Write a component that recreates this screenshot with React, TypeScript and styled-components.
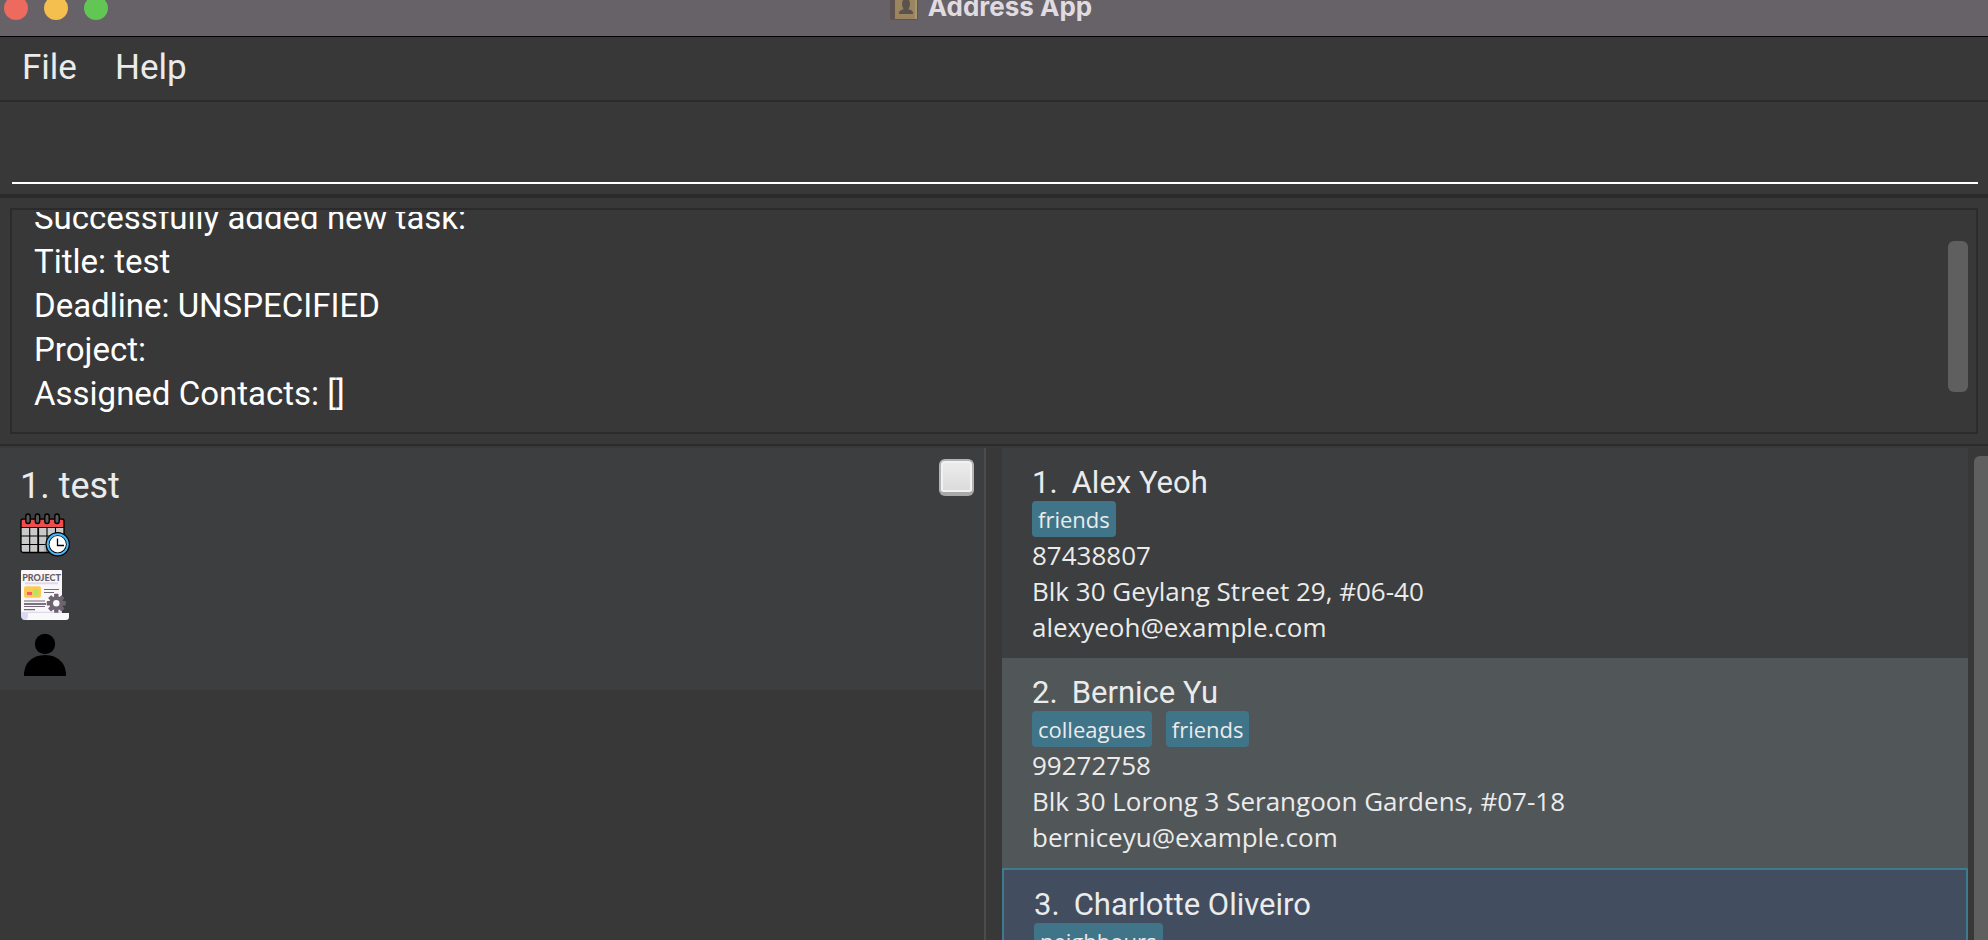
import React, { useEffect, useRef } from "react";
import styled, { createGlobalStyle } from "styled-components";

const color = {
  base: "#383838",
  line: "#2b2b2b",
  card: "#3c3e3f",
  cardAlt: "#515658",
  selected: "#424d5f",
  accent: "#3e7b91",
  tag: "#407489",
  thumb: "#5f5f5f",
  text: "#ebebeb",
};

const uiFont = `Roboto, "Liberation Sans", sans-serif`;
const bodyFont = `"Open Sans", "Noto Sans", sans-serif`;

const GlobalStyle = createGlobalStyle`
  * { box-sizing: border-box; }
  body { margin: 0; background: ${color.base}; overflow: hidden; }
`;

const Window = styled.div`
  display: flex;
  flex-direction: column;
  height: 100vh;
  background: ${color.base};
  color: ${color.text};
  font-family: ${uiFont};
`;

const TitleBar = styled.header`
  flex: none;
  display: grid;
  grid-template-columns: 1fr auto 1fr;
  align-items: center;
  height: 57px;
  margin-top: -20px;
  padding-right: 6px;
  background: #676268;
  border-bottom: 1px solid #000;
`;

const WindowButtons = styled.div`
  display: flex;
  gap: 16px;
  padding-left: 4px;
`;

const WindowButton = styled.button<{ $color: string }>`
  width: 24px;
  height: 24px;
  padding: 0;
  border: 0;
  border-radius: 50%;
  background: ${(p) => p.$color};
`;

const WindowTitle = styled.h1`
  display: flex;
  align-items: center;
  gap: 10px;
  margin: 0;
  padding-bottom: 2px;
  font: 700 26px/32px Inter, sans-serif;
  color: #e0dbe0;
`;

const MenuBar = styled.nav`
  flex: none;
  display: flex;
  height: 65px;
  padding: 0 3px 2px;
  border-bottom: 2px solid ${color.line};
`;

const MenuButton = styled.button`
  padding: 0 19px;
  border: 0;
  background: none;
  color: ${color.text};
  font: 400 35px/40px ${uiFont};
`;

const CommandArea = styled.form`
  flex: none;
  padding: 0 10px 10px 12px;
  border-bottom: 4px solid ${color.line};
`;

const CommandInput = styled.input`
  display: block;
  width: 100%;
  height: 82px;
  padding: 0;
  border: 0;
  border-bottom: 2px solid #fff;
  outline: 0;
  background: none;
  color: #fff;
  font: 400 33px/44px ${uiFont};
`;

const ResultArea = styled.section`
  flex: none;
  padding: 10px;
  border-bottom: 2px solid ${color.line};
`;

const ResultBox = styled.div`
  display: flex;
  height: 226px;
  padding: 2px 8px 0 0;
  border: 2px solid ${color.line};
`;

const ResultText = styled.textarea`
  flex: 1;
  padding: 0 22px;
  border: 0;
  outline: 0;
  resize: none;
  overflow: hidden;
  background: none;
  color: #fff;
  font: 400 33px/44px ${uiFont};
`;

const ResultThumb = styled.div`
  width: 20px;
  height: 151px;
  margin-top: 29px;
  border-radius: 6px;
  background: ${color.thumb};
`;

const Panels = styled.main`
  flex: 1;
  min-height: 0;
  display: grid;
  grid-template-columns: 986fr 1002fr;
  padding-top: 2px;
`;

const TaskPanel = styled.section`
  border-right: 2px solid #4b4c4d;
`;

const TaskCard = styled.article`
  display: flex;
  justify-content: space-between;
  padding: 11px 10px 10px 20px;
  background: ${color.card};
`;

const TaskDetails = styled.div`
  display: flex;
  flex-direction: column;
  gap: 10px;
  padding-top: 3px;
`;

const TaskTitle = styled.h2`
  margin: 0 0 -10px;
  font: 400 36px/48px ${uiFont};
`;

const TaskCheckbox = styled.input`
  appearance: none;
  width: 35px;
  height: 37px;
  margin: 0;
  border: 2px solid #b4b4b4;
  border-bottom: 4px solid #a9a9a9;
  border-radius: 6px;
  background: linear-gradient(#ededed, #dadada);
  box-shadow: inset 0 0 0 2px #f2f2f2;
`;

const ContactPanel = styled.section`
  display: flex;
  gap: 6px;
  min-height: 0;
  padding-left: 16px;
  overflow: hidden;
`;

const ContactList = styled.ol`
  flex: 1;
  margin: 0;
  padding: 0;
  list-style: none;
`;

const ListThumb = styled.div`
  width: 14px;
  margin-top: 8px;
  border-radius: 6px 0 0 0;
  background: ${color.thumb};
`;

type Tone = "card" | "cardAlt" | "selected";

const ContactCard = styled.li<{ $tone: Tone }>`
  padding: 16px 30px 13px;
  background: ${(p) => color[p.$tone]};
  border: ${(p) => (p.$tone === "selected" ? `2px solid ${color.accent}` : "0")};
`;

const ContactName = styled.h2`
  display: flex;
  gap: 14px;
  margin: 0;
  font: 400 31px/37px ${uiFont};
`;

const Tags = styled.div`
  display: flex;
  gap: 14px;
`;

const Tag = styled.span`
  padding: 3px 6px;
  border-radius: 4px;
  background: ${color.tag};
  font: 400 22px/30px ${bodyFont};
`;

const ContactLine = styled.p`
  margin: 0;
  font: 400 26px/36px ${bodyFont};
`;

const Icon = styled.svg`
  display: block;
`;

const BookIcon = () => (
  <Icon width="28" height="28" viewBox="0 0 28 28" aria-hidden="true">
    <rect x="0" y="0" width="28" height="27" rx="2" fill="#5e5350" />
    <rect x="5" y="0" width="22" height="26" fill="#9a8560" />
    <rect x="25" y="0" width="2" height="26" fill="#ab956d" />
    <ellipse cx="16" cy="11" rx="4" ry="6" fill="#5c524c" />
    <path d="M9 21v-2q1-2 5-3v-2h4v2q4 1 5 3v2z" fill="#5c524c" />
  </Icon>
);

const DeadlineIcon = () => (
  <Icon width="50" height="50" viewBox="0 0 50 50" role="img" aria-label="Deadline">
    <rect x="1" y="9" width="43" height="33" rx="2" fill="#c9c9c9" />
    <path d="M1 17.5V11q0-2.500 2-2.500H42q2 0 2 2.500v6.500z" fill="#ef4c4c" />
    <path d="M1 17.500H44M1 26H44M1 34.500H44M9.700 17.500V42M35.500 17.500V42M27 17.500V42" stroke="#000" strokeWidth="1.100" />
    <path d="M18.200 17.500V42" stroke="#000" strokeWidth="1.800" />
    <path d="M24 42q-1-12 8-17 6-3 12 0V42z" fill="#8f8f8f" opacity=".45" />
    <rect x="1" y="9" width="43" height="33.500" rx="2" fill="none" stroke="#000" strokeWidth="1.300" />
    {[8, 17.5, 27, 37].map((x) => (
      <rect key={x} x={x - 2.2} y="4" width="4.400" height="9.500" rx="2.200" fill="#595959" stroke="#000" strokeWidth="1.400" />
    ))}
    <circle cx="37.700" cy="34.300" r="12.200" fill="#000" />
    <circle cx="37.700" cy="34.300" r="11" fill="#4db8f5" />
    <circle cx="37.700" cy="34.300" r="9" fill="#000" />
    <circle cx="37.700" cy="34.300" r="8.200" fill="#fff" />
    <path d="M37.500 28.500V35.500H44" fill="none" stroke="#000" strokeWidth="1.300" />
  </Icon>
);

const ProjectIcon = () => (
  <Icon width="50" height="50" viewBox="0 0 50 50" role="img" aria-label="Project">
    <path d="M1 1q0-1 1-1H41q1 0 1 1V44H1z" fill="#f9f7f8" />
    <text x="21.500" y="11" textAnchor="middle" fontFamily="Lato, sans-serif" fontWeight="900" fontSize="9" fill="#655b66">
      PROJECT
    </text>
    <rect x="5" y="12.300" width="33" height="2" fill="#dcdaf0" />
    <rect x="4" y="16.200" width="17" height="11.500" rx="2" fill="#fccb55" />
    <rect x="7" y="22" width="5" height="3" fill="#f9596b" />
    <rect x="14" y="19" width="4.500" height="6" fill="#b3e55e" />
    <path d="M24 19.500H39M24 22.500H34M4 31H25M4 36.500H25M4 39.700H15" stroke="#74697a" strokeWidth="1.200" />
    <path d="M4 34H26" stroke="#655b66" strokeWidth="1.700" />
    <path d="M8 42.500H42" stroke="#dcdaf0" strokeWidth="1.500" />
    <path d="M1 42H8V50H4q-3-1-3-4z" fill="#dcdaf0" />
    <path d="M8 43H49v4q0 3-3 3H5q3-1 3-4z" fill="#faf9f9" />
    <g transform="translate(36.300 33.300)">
      {[0, 45, 90, 135].map((a) => (
        <rect key={a} x="-2.200" y="-9.500" width="4.400" height="19" rx=".6" transform={`rotate(${a})`} fill="#6e6471" />
      ))}
      <circle r="7" fill="#6e6471" />
      <circle r="3.200" fill="#faf9f9" />
    </g>
  </Icon>
);

const PersonIcon = () => (
  <Icon width="50" height="50" viewBox="0 0 50 50" role="img" aria-label="Assigned contacts">
    <circle cx="25" cy="14" r="10.200" fill="#000" />
    <path d="M4 46V43Q5 31 16 26.500Q20 25 25 25T34 26.500Q45 31 46 43V46z" fill="#000" />
  </Icon>
);

const result = "Successfully added new task:\nTitle: test\nDeadline: UNSPECIFIED\nProject:\nAssigned Contacts: []\n\n";

const contacts: { name: string; tags: string[]; lines: string[]; tone: Tone }[] = [
  {
    name: "Alex Yeoh",
    tags: ["friends"],
    lines: ["87438807", "Blk 30 Geylang Street 29, #06-40", "alexyeoh@example.com"],
    tone: "card",
  },
  {
    name: "Bernice Yu",
    tags: ["colleagues", "friends"],
    lines: ["99272758", "Blk 30 Lorong 3 Serangoon Gardens, #07-18", "berniceyu@example.com"],
    tone: "cardAlt",
  },
  { name: "Charlotte Oliveiro", tags: ["neighbours"], lines: [], tone: "selected" },
];

export default function App() {
  const resultRef = useRef<HTMLTextAreaElement>(null);

  useEffect(() => {
    if (resultRef.current) resultRef.current.scrollTop = 16;
  }, []);

  return (
    <Window>
      <GlobalStyle />
      <TitleBar>
        <WindowButtons>
          <WindowButton $color="#ed6a5f" aria-label="Close" />
          <WindowButton $color="#f5bf4f" aria-label="Minimize" />
          <WindowButton $color="#62c655" aria-label="Zoom" />
        </WindowButtons>
        <WindowTitle>
          <BookIcon />
          Address App
        </WindowTitle>
      </TitleBar>
      <MenuBar>
        <MenuButton>File</MenuButton>
        <MenuButton>Help</MenuButton>
      </MenuBar>
      <CommandArea onSubmit={(e) => e.preventDefault()}>
        <CommandInput type="text" aria-label="Command" />
      </CommandArea>
      <ResultArea>
        <ResultBox>
          <ResultText ref={resultRef} readOnly aria-label="Result" spellCheck={false} value={result} />
          <ResultThumb />
        </ResultBox>
      </ResultArea>
      <Panels>
        <TaskPanel>
          <TaskCard>
            <TaskDetails>
              <TaskTitle>1. test</TaskTitle>
              <DeadlineIcon />
              <ProjectIcon />
              <PersonIcon />
            </TaskDetails>
            <TaskCheckbox type="checkbox" aria-label="Mark test as done" />
          </TaskCard>
        </TaskPanel>
        <ContactPanel>
          <ContactList>
            {contacts.map((c, i) => (
              <ContactCard key={c.name} $tone={c.tone}>
                <ContactName>
                  <span>{i + 1}.</span>
                  <span>{c.name}</span>
                </ContactName>
                <Tags>
                  {c.tags.map((t) => (
                    <Tag key={t}>{t}</Tag>
                  ))}
                </Tags>
                {c.lines.map((l) => (
                  <ContactLine key={l}>{l}</ContactLine>
                ))}
              </ContactCard>
            ))}
          </ContactList>
          <ListThumb />
        </ContactPanel>
      </Panels>
    </Window>
  );
}
